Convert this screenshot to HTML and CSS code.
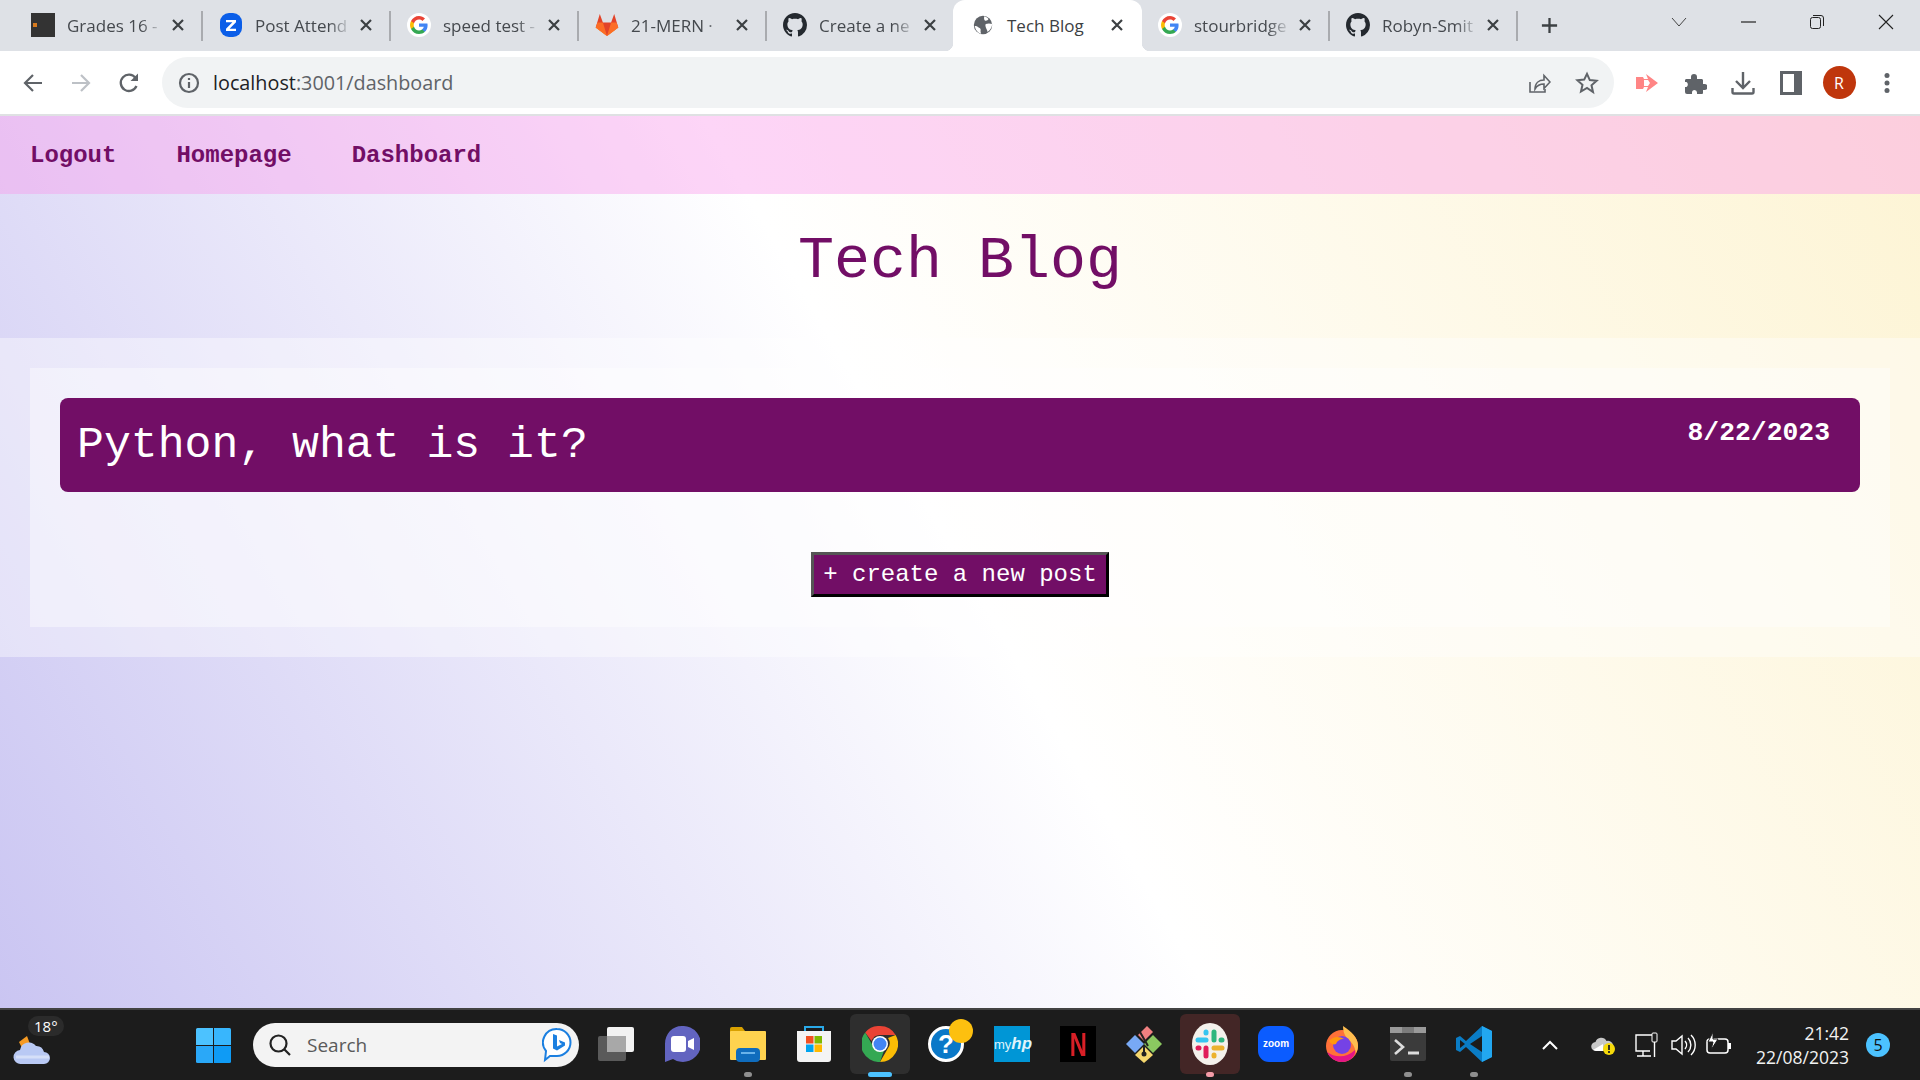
FILE: index.html
```html
<!DOCTYPE html>
<html lang="en">
<head>
  <meta charset="UTF-8" />
  <title>Tech Blog</title>
  <link rel="stylesheet" href="styles.css">
</head>
<body>
  <svg class="defs" width="0" height="0">
    <symbol id="g-logo" viewBox="0 0 24 24">
      <circle cx="12" cy="12" r="12" fill="#fff"/>
      <path fill="#4285f4" d="M20.6 12.2c0-.6-.1-1.200-.2-1.800H12v3.400h4.800c-.2 1.100-.8 2-1.800 2.700v2.200h2.900c1.700-1.600 2.700-3.800 2.700-6.500z"/>
      <path fill="#34a853" d="M12 21c2.400 0 4.400-.8 5.900-2.200L15 16.500c-.8.500-1.800.9-3 .9-2.300 0-4.300-1.600-5-3.700H4v2.300C5.500 19 8.500 21 12 21z"/>
      <path fill="#fbbc05" d="M7 13.700c-.2-.5-.3-1.100-.3-1.700s.1-1.200.3-1.700V8H4c-.6 1.200-1 2.600-1 4s.4 2.800 1 4l3-2.300z"/>
      <path fill="#ea4335" d="M12 6.600c1.300 0 2.500.5 3.400 1.300L18 5.400C16.400 3.900 14.400 3 12 3 8.500 3 5.500 5 4 8l3 2.300c.7-2.100 2.700-3.700 5-3.700z"/>
    </symbol>
    <symbol id="gh-logo" viewBox="0 0 16 16">
      <path fill="#24292f" d="M8 0C3.580 0 0 3.580 0 8c0 3.540 2.290 6.530 5.470 7.590.4.070.55-.17.55-.38 0-.19-.01-.82-.01-1.490-2.010.37-2.530-.49-2.690-.94-.09-.23-.48-.94-.82-1.130-.28-.15-.68-.52-.01-.53.63-.01 1.080.58 1.230.82.720 1.210 1.870.87 2.330.66.070-.52.280-.87.510-1.070-1.780-.2-3.640-.89-3.640-3.950 0-.87.310-1.590.820-2.150-.08-.2-.36-1.020.08-2.120 0 0 .67-.21 2.200.82.640-.18 1.320-.27 2-.27s1.360.09 2 .27c1.530-1.040 2.200-.82 2.200-.82.440 1.100.16 1.920.08 2.120.51.560.82 1.270.82 2.150 0 3.070-1.870 3.750-3.650 3.950.29.250.54.730.54 1.480 0 1.070-.01 1.930-.01 2.200 0 .21.150.46.550.38A8.010 8.010 0 0 0 16 8c0-4.420-3.580-8-8-8z"/>
    </symbol>
    <symbol id="x-icon" viewBox="0 0 14 14">
      <path d="M2 2l10 10M12 2L2 12" stroke="#3c4043" stroke-width="2.200" fill="none"/>
    </symbol>
  </svg>

  <div class="tabstrip">
    <div class="tab">
      <span class="favicon fav-grades"><i></i></span>
      <span class="tab-title">Grades 16 -</span>
      <svg class="tab-close"><use href="#x-icon"/></svg>
    </div>
    <span class="sep"></span>
    <div class="tab">
      <svg class="favicon" viewBox="0 0 24 24"><rect x="1" width="22" height="24" rx="9" fill="#0b5ee8"/><path d="M7 7h10v2.200l-6.400 6.600H17V18H7v-2.200l6.400-6.600H7z" fill="#fff"/></svg>
      <span class="tab-title">Post Attend</span>
      <svg class="tab-close"><use href="#x-icon"/></svg>
    </div>
    <span class="sep"></span>
    <div class="tab">
      <svg class="favicon"><use href="#g-logo"/></svg>
      <span class="tab-title">speed test -</span>
      <svg class="tab-close"><use href="#x-icon"/></svg>
    </div>
    <span class="sep"></span>
    <div class="tab">
      <svg class="favicon" viewBox="0 0 24 24">
        <path fill="#e24329" d="M12 23L.7 14.500 4.800 1l3.100 8.500h8.200L19.200 1l4.100 13.500z"/>
        <path fill="#fca326" d="M12 23L.7 14.500l2-1.500L12 23zm0 0l11.300-8.500-2-1.500L12 23z"/>
        <path fill="#fc6d26" d="M12 23L.7 14.500 2.500 9.500 7.900 9.500zm0 0l11.300-8.500-1.800-5-5.400 0z"/>
      </svg>
      <span class="tab-title">21-MERN ·</span>
      <svg class="tab-close"><use href="#x-icon"/></svg>
    </div>
    <span class="sep"></span>
    <div class="tab">
      <svg class="favicon"><use href="#gh-logo"/></svg>
      <span class="tab-title">Create a ne</span>
      <svg class="tab-close"><use href="#x-icon"/></svg>
    </div>
    <span class="sep off"></span>
    <div class="tab active">
      <svg class="favicon globe" viewBox="0 0 24 24">
        <circle cx="12" cy="12" r="10" fill="#5f6368"/>
        <path fill="#fff" d="M13.500 2.500c1.500.5 3.300 1.600 4.500 3-.8 1.500-2.500 2.200-4 1.500-.8-.5-1.200-3-.5-4.500zM3 13c2 0 3.500.5 4.500 2 1.300.2 2 1.200 2 2.500-.5 1.500.2 3 .5 4-3.500-.8-6.300-4.500-7-8.500zM15 11c2-1 5-1 7 0 0 3-1.800 6.500-5 8.500-.3-2.500-3.500-6-2-8.500z"/>
      </svg>
      <span class="tab-title">Tech Blog</span>
      <svg class="tab-close"><use href="#x-icon"/></svg>
    </div>
    <span class="sep off"></span>
    <div class="tab">
      <svg class="favicon"><use href="#g-logo"/></svg>
      <span class="tab-title">stourbridge</span>
      <svg class="tab-close"><use href="#x-icon"/></svg>
    </div>
    <span class="sep"></span>
    <div class="tab">
      <svg class="favicon"><use href="#gh-logo"/></svg>
      <span class="tab-title">Robyn-Smit</span>
      <svg class="tab-close"><use href="#x-icon"/></svg>
    </div>
    <span class="sep"></span>
    <svg class="new-tab" viewBox="0 0 20 20"><path d="M10 2v16M2 10h16" stroke="#3c4043" stroke-width="2.400"/></svg>

    <div class="win-controls">
      <span class="win-btn"><svg width="16" height="16" viewBox="0 0 16 16"><path d="M1 4l7 8 7-8" stroke="#444" fill="none"/></svg></span>
      <span class="win-btn"><svg width="16" height="16" viewBox="0 0 16 16"><path d="M1 8h15" stroke="#222" stroke-width="1.200"/></svg></span>
      <span class="win-btn"><svg width="16" height="16" viewBox="0 0 16 16"><rect x="1.500" y="3.500" width="10" height="11" rx="2" stroke="#222" fill="none"/><path d="M4 1.500h8a2.500 2.500 0 0 1 2.500 2.500v8" stroke="#222" fill="none"/></svg></span>
      <span class="win-btn"><svg width="16" height="16" viewBox="0 0 16 16"><path d="M1 1l14 14M15 1L1 15" stroke="#222" stroke-width="1.100"/></svg></span>
    </div>
  </div>

  <div class="toolbar">
    <span class="tool-btn"><svg width="24" height="24" viewBox="0 0 24 24"><path d="M21 12H4M12 4l-8 8 8 8" stroke="#5f6368" stroke-width="2.200" fill="none"/></svg></span>
    <span class="tool-btn"><svg width="24" height="24" viewBox="0 0 24 24"><path d="M3 12h17M12 4l8 8-8 8" stroke="#bdc1c6" stroke-width="2.200" fill="none"/></svg></span>
    <span class="tool-btn"><svg width="24" height="24" viewBox="0 0 24 24"><path d="M19.500 15a8.200 8.200 0 1 1-1-8.200" stroke="#5f6368" stroke-width="2.300" fill="none"/><path d="M21 2.500V10h-7.500z" fill="#5f6368"/></svg></span>

    <div class="omnibox">
      <svg class="omni-icon" viewBox="0 0 24 24"><circle cx="12" cy="12" r="9" stroke="#5f6368" stroke-width="2.200" fill="none"/><path d="M12 11v6M12 7v2" stroke="#5f6368" stroke-width="2.200"/></svg>
      <span class="address"><span class="host">localhost</span>:3001/dashboard</span>
      <div class="omni-right">
        <svg class="omni-icon" viewBox="0 0 24 24"><path d="M3 11v10h15v-3" stroke="#5f6368" stroke-width="1.600" fill="none"/><path d="M8 18c0-6 4-9 9-9V4.500l6 6.500-6 6.500V13c-4 0-7 1.500-9 5z" stroke="#5f6368" stroke-width="1.600" fill="none"/></svg>
        <svg class="omni-icon" viewBox="0 0 24 24"><path d="M12 2.800l2.800 6.300 6.800.7-5.100 4.500 1.500 6.700L12 17l-6 3.500 1.500-6.700-5.100-4.500 6.800-.7z" stroke="#5f6368" stroke-width="2" fill="none"/></svg>
      </div>
    </div>

    <div class="tool-group">
      <span class="tool-btn"><svg width="24" height="24" viewBox="0 0 24 24"><path d="M1 6h7l1 2h4l-2-5 12 9-12 9 2-5H9l-1 2H1z" fill="#ff8585"/><path d="M9 9h4l2 3-2 3H9z" fill="#fff"/></svg></span>
      <span class="tool-btn"><svg width="24" height="24" viewBox="0 0 24 24"><path fill="#5f6368" d="M3 8h5V6a3 3 0 0 1 6 0v2h5a2 2 0 0 1 1 1v4h1.500a3 3 0 0 1 0 6H20v3a1 1 0 0 1-1 1h-5v-1.500a2.500 2.500 0 0 0-5 0V23H4a2 2 0 0 1-2-2v-5h1.500a3 3 0 0 0 0-5H2V9a2 2 0 0 1 1-1z"/></svg></span>
      <span class="tool-btn"><svg width="24" height="24" viewBox="0 0 24 24"><path d="M12 1v15M5 10l7 7 7-7" stroke="#5f6368" stroke-width="2.400" fill="none"/><path d="M1.500 17v4a1.500 1.500 0 0 0 1.500 1.500h18a1.500 1.500 0 0 0 1.500-1.500v-4" stroke="#5f6368" stroke-width="2.400" fill="none"/></svg></span>
      <span class="tool-btn"><svg width="22" height="24" viewBox="0 0 22 24"><path fill="#5f6368" fill-rule="evenodd" d="M0 0h22v24H0zM3 3v18h11V3z"/></svg></span>
      <span class="tool-btn"><span class="avatar">R</span></span>
      <span class="tool-btn"><svg width="6" height="24" viewBox="0 0 6 24"><circle cx="3" cy="4.500" r="2.500" fill="#5f6368"/><circle cx="3" cy="12" r="2.500" fill="#5f6368"/><circle cx="3" cy="19.500" r="2.500" fill="#5f6368"/></svg></span>
    </div>
  </div>

  <div class="page">
    <nav class="site-nav">
      <a>Logout</a>
      <a>Homepage</a>
      <a>Dashboard</a>
    </nav>
    <header class="site-header">
      <h1>Tech Blog</h1>
    </header>
    <main class="site-main">
      <div class="dash-card">
        <div class="post-bar">
          <h2>Python, what is it?</h2>
          <span class="post-date">8/22/2023</span>
        </div>
        <div class="actions">
          <button class="new-post">+ create a new post</button>
        </div>
      </div>
    </main>
  </div>

  <footer class="taskbar">
    <div class="weather">
      <svg width="40" height="36" viewBox="0 0 40 36">
        <path d="M6 10l8-6 3 8-8 4z" fill="#f59a23"/>
        <path d="M8 32a7 7 0 0 1-1-14 9 9 0 0 1 16-4 8 8 0 0 1 8 6 6 6 0 0 1 0 12z" fill="#b9c9f4"/>
        <path d="M3 25h33" stroke="#e8eefc" stroke-width="3" opacity=".6"/>
      </svg>
      <span class="temp">18°</span>
    </div>

    <span class="start-btn">
      <svg width="35" height="35" viewBox="0 0 35 35">
        <path fill="#4cc2ff" d="M0 1.500A1.500 1.500 0 0 1 1.500 0H17v17H0z"/>
        <path fill="#38b6fd" d="M18 0h15.500A1.500 1.500 0 0 1 35 1.500V17H18z"/>
        <path fill="#2aa8f8" d="M0 18h17v17H1.500A1.500 1.500 0 0 1 0 33.500z"/>
        <path fill="#0f9bf5" d="M18 18h17v15.500a1.500 1.500 0 0 1-1.500 1.500H18z"/>
      </svg>
    </span>

    <div class="searchbox">
      <svg width="24" height="24" viewBox="0 0 24 24"><circle cx="10.500" cy="10.500" r="8" stroke="#222" stroke-width="2.200" fill="none"/><path d="M16.500 16.500L22 22" stroke="#222" stroke-width="2.200"/></svg>
      <span class="search-label">Search</span>
      <svg class="bing" width="30" height="36" viewBox="0 0 30 36">
        <path d="M15 2a13.500 13.500 0 0 1 0 27H8l-5 4 1-9A13.500 13.500 0 0 1 15 2z" fill="#fff" stroke="#1b7fe0" stroke-width="2"/>
        <path d="M11 7l4 1.500v11l5-2.500-2-1-1-3 6 2.500v3l-8 5-4-2z" fill="#1b7fe0"/>
      </svg>
    </div>

    <div class="apps">
      <span class="app">
        <svg width="36" height="34" viewBox="0 0 36 34"><rect y="9" width="28" height="25" rx="2" fill="#5a5a5a"/><rect x="9" width="27" height="25" rx="2" fill="#f2f2f2"/><rect x="9" y="9" width="19" height="16" fill="#a8a8a8"/></svg>
      </span>
      <span class="app">
        <svg width="36" height="36" viewBox="0 0 36 36"><path d="M18 0C8 0 1 8 1 18v18l8-3a18 18 0 1 0 9-33z" fill="#6264c0"/><rect x="7" y="10" width="15" height="16" rx="3" fill="#fff"/><path d="M24 15l6-3v12l-6-3z" fill="#fff"/></svg>
      </span>
      <span class="app">
        <svg width="36" height="36" viewBox="0 0 36 36"><path d="M0 3a2 2 0 0 1 2-2h10l3 4v6H0z" fill="#d9a100"/><rect y="5" width="36" height="29" rx="1" fill="#ffd34f"/><rect x="6" y="22" width="24" height="14" rx="4" fill="#0f6cbd"/><path d="M11 27h14" stroke="#7fc4f5" stroke-width="1.600"/></svg>
        <i class="dot"></i>
      </span>
      <span class="app">
        <svg width="36" height="36" viewBox="0 0 36 36"><path d="M9 6V1h18v5" stroke="#29a9e8" stroke-width="2" fill="none"/><path d="M1 5h34v28a3 3 0 0 1-3 3H4a3 3 0 0 1-3-3z" fill="#f4f4f4"/><rect x="10" y="10" width="7.500" height="7.500" fill="#f25022"/><rect x="18.500" y="10" width="7.500" height="7.500" fill="#7fba00"/><rect x="10" y="18.500" width="7.500" height="7.500" fill="#00a4ef"/><rect x="18.500" y="18.500" width="7.500" height="7.500" fill="#ffb900"/></svg>
      </span>
      <span class="app current">
        <svg width="36" height="36" viewBox="0 0 36 36"><path d="M18 0a18 18 0 0 1 15.600 9H18a9 9 0 0 0-8.500 6L3.200 6.500A18 18 0 0 1 18 0z" fill="#ea4335"/><path d="M33.600 9A18 18 0 0 1 18 36l7.800-13.500A9 9 0 0 0 26 12z" fill="#fbbc05"/><path d="M18 36A18 18 0 0 1 3.200 6.500l7.800 13.500a9 9 0 0 0 11 4.500z" fill="#34a853"/><circle cx="18" cy="18" r="8" fill="#fff"/><circle cx="18" cy="18" r="6.500" fill="#4285f4"/></svg>
        <i class="dot wide"></i>
      </span>
      <span class="app app-help">
        <span class="help-ring">?</span>
        <i class="help-blob"></i>
      </span>
      <span class="app"><span class="myhp">my<em>hp</em></span></span>
      <span class="app"><span class="netflix"><b>N</b></span></span>
      <span class="app">
        <svg width="36" height="38" viewBox="0 0 36 38">
          <path d="M18 9l9-9 6 6-9 9z" fill="#f08080" transform="translate(-6 1)"/>
          <path d="M9 10l9 9-9 9-9-9z" fill="#78a9f5"/>
          <path d="M27 10l9 9-9 9-9-9z" fill="#8bc860"/>
          <path d="M18 21l9 9-9 8-9-8z" fill="#f5d76e"/>
          <path d="M14 7l8 14M18 21v9" stroke="#222" stroke-width="2"/>
          <circle cx="18" cy="29" r="2.500" fill="#222"/>
        </svg>
      </span>
      <span class="app slack-on">
        <span class="slack">
          <svg width="30" height="30" viewBox="0 0 30 30" fill="none" stroke-width="5" stroke-linecap="round">
            <path d="M3 11h8" stroke="#36c5f0"/><path d="M11 3v1" stroke="#36c5f0"/>
            <path d="M19 3v8" stroke="#2eb67d"/><path d="M26 11h1" stroke="#2eb67d"/>
            <path d="M19 19h8" stroke="#ecb22e"/><path d="M19 26v1" stroke="#ecb22e"/>
            <path d="M11 19v8" stroke="#e01e5a"/><path d="M3 19h1" stroke="#e01e5a"/>
          </svg>
        </span>
        <i class="dot pink"></i>
      </span>
      <span class="app"><span class="zoom-ic">zoom</span></span>
      <span class="app">
        <svg width="36" height="36" viewBox="0 0 36 36">
          <circle cx="18" cy="20" r="16" fill="#ff7139"/>
          <path d="M18 36a16 16 0 0 1-15-10c8 6 20 6 28-2 1 6-5 12-13 12z" fill="#e31587"/>
          <path d="M19 0c9 6 15 12 15 20 0 3-1 5-2 7-1-8-6-12-10-16-2-3-3-7-3-11z" fill="#ffbd4f"/>
          <circle cx="18" cy="19" r="9" fill="#7542e5"/>
          <path d="M5 15c4-5 11-5 15-2-4 0-7 2-8 5-3 1-5 0-7-3z" fill="#ff980e"/>
        </svg>
      </span>
      <span class="app">
        <svg width="36" height="34" viewBox="0 0 36 34"><rect width="36" height="34" rx="2" fill="#3b3b3b"/><rect width="36" height="6" fill="#9a9a9a"/><rect x="12" width="12" height="6" fill="#7c7c7c"/><path d="M5 13l8 7-8 7" stroke="#ddd" stroke-width="2.600" fill="none"/><path d="M18 26h11" stroke="#ddd" stroke-width="3"/></svg>
        <i class="dot"></i>
      </span>
      <span class="app">
        <svg width="36" height="36" viewBox="0 0 36 36"><path d="M26 0l10 5v26l-10 5-16-15-6 5-4-2V12l4-2 6 5z" fill="#0a7cc5"/><path d="M26 0l10 5v26l-10 5z" fill="#22a7f0"/><path d="M26 10L14 18l12 8z" fill="#1c1c1c"/><path d="M4 14l5 4-5 4z" fill="#1c1c1c"/></svg>
        <i class="dot"></i>
      </span>
    </div>

    <div class="tray">
      <span class="tray-item chevron"><svg width="18" height="12" viewBox="0 0 18 12"><path d="M2 10l7-7 7 7" stroke="#fff" stroke-width="2" fill="none"/></svg></span>
      <span class="tray-item cloud">
        <svg width="26" height="24" viewBox="0 0 26 24"><path d="M5 18a4.500 4.500 0 0 1-.5-9 6 6 0 0 1 11-1 5 5 0 0 1 3 10z" fill="#c8c8c8"/><path d="M2 17l10-6v7H5z" fill="#fff"/><circle cx="18" cy="16" r="6" fill="#f5d90a"/><path d="M18 12v5M18 18v2" stroke="#222" stroke-width="1.800"/></svg>
      </span>
      <span class="tray-item">
        <svg width="26" height="26" viewBox="0 0 26 26"><path d="M18 3H2v16h14M9 19v5M3 24h14" stroke="#fff" stroke-width="1.400" fill="none"/><rect x="18" y="1" width="5" height="9" rx="1" stroke="#fff" fill="none"/><path d="M20.500 10v15" stroke="#fff" stroke-width="1.400"/></svg>
      </span>
      <span class="tray-item">
        <svg width="26" height="26" viewBox="0 0 26 26"><path d="M2 9h4l6-5v18l-6-5H2z" stroke="#fff" stroke-width="1.400" fill="none"/><path d="M15 9a6 6 0 0 1 0 8M18 6a10 10 0 0 1 0 14M21 3a14 14 0 0 1 0 20" stroke="#fff" stroke-width="1.400" fill="none"/></svg>
      </span>
      <span class="tray-item">
        <svg width="26" height="26" viewBox="0 0 26 26"><rect x="1" y="7" width="21" height="14" rx="3" stroke="#fff" stroke-width="1.500" fill="none"/><rect x="22" y="11" width="3" height="6" fill="#fff"/><path d="M7 0L2 10h5l-2 8 7-11H7z" fill="#fff" stroke="#1c1c1c"/></svg>
      </span>
      <div class="clock">
        <span>21:42</span>
        <span>22/08/2023</span>
      </div>
      <span class="notif">5</span>
    </div>
  </footer>
</body>
</html>
```

FILE: styles.css
```css
* {
  box-sizing: border-box;
}
html, body {
  height: 100%;
}
body {
  margin: 0;
  height: 1080px;
  overflow: hidden;
  display: flex;
  flex-direction: column;
  font-family: "Open Sans", "Noto Sans", sans-serif;
  background: #fff;
}
.defs {
  position: absolute;
}

/* browser chrome */
.tabstrip {
  height: 51px;
  flex: none;
  display: flex;
  align-items: center;
  padding-left: 15px;
  background: #dee1e6;
}
.tab {
  width: 186px;
  height: 51px;
  flex: none;
  display: flex;
  align-items: center;
  padding: 0 16px 1px 16px;
  color: #45494e;
  font-size: 17px;
}
.tab.active {
  position: relative;
  color: #3c4043;
  background: #fff;
  border-radius: 12px 12px 0 0;
  margin: 0 -2px 0 -2px;
  width: 189px;
  padding-left: 18px;
  padding-right: 18px;
}
.tab.active::before,
.tab.active::after {
  content: "";
  position: absolute;
  bottom: 0;
  width: 8px;
  height: 8px;
}
.tab.active::before {
  left: -8px;
  background: radial-gradient(circle at 0 0, transparent 8px, #fff 8.5px);
}
.tab.active::after {
  right: -8px;
  background: radial-gradient(circle at 100% 0, transparent 8px, #fff 8.5px);
}
.favicon {
  width: 24px;
  height: 24px;
  flex: none;
}
.fav-grades {
  background: #333;
  display: flex;
  align-items: center;
  padding-left: 2px;
}
.fav-grades i {
  width: 4px;
  height: 4px;
  background: #d77b1f;
}
.globe {
  width: 22px;
  height: 22px;
  margin: 0 1px;
}
.tab-title {
  flex: 1;
  min-width: 0;
  margin-left: 12px;
  white-space: nowrap;
  -webkit-mask-image: linear-gradient(to right, #000 76%, transparent 100%);
  mask-image: linear-gradient(to right, #000 76%, transparent 100%);
}
.active .tab-title {
  -webkit-mask-image: none;
  mask-image: none;
}
.tab-close {
  width: 14px;
  height: 14px;
  flex: none;
  margin-left: 7px;
}
.sep {
  width: 2px;
  height: 30px;
  flex: none;
  background: #a9abaf;
}
.sep.off {
  background: transparent;
}
.new-tab {
  width: 19px;
  height: 19px;
  margin-left: 22px;
  flex: none;
}
.win-controls {
  margin-left: auto;
  align-self: flex-start;
  display: flex;
}
.win-btn {
  width: 69px;
  height: 44px;
  display: flex;
  align-items: center;
  justify-content: center;
}
.toolbar {
  height: 65px;
  flex: none;
  display: flex;
  align-items: center;
  padding-left: 9px;
  background: #fff;
  border-bottom: 2px solid #dfe1e3;
}
.tool-btn {
  width: 48px;
  height: 48px;
  flex: none;
  display: flex;
  align-items: center;
  justify-content: center;
}
.omnibox {
  width: 1452px;
  height: 51px;
  margin-left: 9px;
  padding: 0 15px;
  flex: none;
  display: flex;
  align-items: center;
  gap: 12px;
  border-radius: 26px;
  background: #f1f3f4;
}
.omni-icon {
  width: 24px;
  height: 24px;
  flex: none;
}
.address {
  font-size: 19.800px;
  color: #5f6368;
}
.host {
  color: #202124;
}
.omni-right {
  margin-left: auto;
  display: flex;
  gap: 24px;
}
.tool-group {
  display: flex;
  margin-left: 9px;
}
.avatar {
  width: 33px;
  height: 33px;
  border-radius: 50%;
  background: #bf360c;
  color: #fff;
  font-size: 16px;
  display: flex;
  align-items: center;
  justify-content: center;
}

/* the site itself */
.page {
  flex: 1;
  min-height: 0;
  font-family: "Liberation Mono", "Courier New", monospace;
  color: #720e66;
  background: linear-gradient(60deg, #cac5f2 0%, #ffffff 50%, #fdf4d4 100%);
}
.site-nav {
  height: 78px;
  display: flex;
  align-items: center;
  gap: 60px;
  padding: 0 30px;
  font-size: 24px;
  font-weight: bold;
  background: rgba(250, 150, 235, 0.4);
}
.site-header {
  height: 144px;
  display: flex;
  align-items: center;
  justify-content: center;
}
.site-header h1 {
  margin: 0 0 10px;
  font-size: 60px;
  font-weight: normal;
}
.site-main {
  padding: 30px;
  background: rgba(255, 255, 255, 0.4);
}
.dash-card {
  padding: 30px;
  background: rgba(255, 255, 255, 0.4);
}
.post-bar {
  height: 94px;
  display: flex;
  justify-content: space-between;
  padding: 0 30px 0 17px;
  border-radius: 8px;
  background: #720e66;
  color: #fff;
}
.post-bar h2 {
  margin: 22px 0 0;
  font-size: 44.800px;
  font-weight: normal;
  line-height: 50px;
}
.post-date {
  margin-top: 20px;
  font-size: 26.400px;
  font-weight: bold;
  line-height: 30px;
}
.actions {
  margin-top: 60px;
  display: flex;
  justify-content: center;
}
.new-post {
  height: 45px;
  width: 298px;
  padding: 0;
  font-family: inherit;
  font-size: 24px;
  color: #fff;
  background: #720e66;
  border: 3px solid;
  border-color: #555 #000 #000 #555;
}

/* windows taskbar */
.taskbar {
  height: 72px;
  flex: none;
  display: flex;
  align-items: center;
  background: #1c1c1c;
  border-top: 2px solid #434343;
  color: #fff;
}
.weather {
  width: 180px;
  flex: none;
  padding: 14px 0 0 13px;
  position: relative;
}
.temp {
  position: absolute;
  left: 28px;
  top: -2px;
  padding: 0 6px;
  border-radius: 14px;
  background: #2b2b2b;
  font-size: 15px;
}
.start-btn {
  width: 66px;
  flex: none;
  display: flex;
  justify-content: center;
}
.searchbox {
  width: 326px;
  height: 44px;
  margin-left: 7px;
  padding: 0 7px 0 15px;
  flex: none;
  display: flex;
  align-items: center;
  gap: 15px;
  border-radius: 22px;
  background: #f3f3f3;
}
.search-label {
  color: #5a5a5a;
  font-size: 19px;
}
.bing {
  margin-left: auto;
}
.apps {
  margin-left: 4px;
  display: flex;
  flex: none;
}
.app {
  position: relative;
  width: 66px;
  height: 70px;
  display: flex;
  align-items: center;
  justify-content: center;
  padding-bottom: 2px;
}
.app.current::before,
.app.slack-on::before {
  content: "";
  position: absolute;
  left: 3px;
  right: 3px;
  top: 4px;
  bottom: 6px;
  border-radius: 6px;
  background: #2e2e2e;
}
.app.slack-on::before {
  background: #432626;
}
.app > svg,
.app > span {
  position: relative;
}
.dot {
  position: absolute;
  left: 29px;
  bottom: 3px;
  width: 8px;
  height: 5px;
  border-radius: 3px;
  background: #8f8f8f;
}
.dot.wide {
  left: 21px;
  width: 24px;
  background: #4cc2ff;
}
.dot.pink {
  background: #f49ca8;
}
.help-ring {
  width: 36px;
  height: 36px;
  border-radius: 50%;
  border: 3px solid #fff;
  background: #0a78c8;
  color: #fff;
  font: bold 26px "Liberation Sans", sans-serif;
  display: flex;
  align-items: center;
  justify-content: center;
}
.help-blob {
  position: absolute;
  left: 36px;
  top: 9px;
  width: 24px;
  height: 24px;
  border-radius: 50%;
  background: #fdc00f;
}
.myhp {
  width: 36px;
  height: 36px;
  background: #0096d6;
  color: #dff3fb;
  font: 13px/36px "Liberation Sans", sans-serif;
  text-align: center;
}
.myhp em {
  font-size: 17px;
  font-weight: bold;
}
.netflix {
  width: 36px;
  height: 36px;
  background: #000;
  color: #d81f26;
  font: 34px/36px "Liberation Sans", sans-serif;
  text-align: center;
}
.netflix b {
  display: inline-block;
  transform: scaleX(0.7);
}
.slack {
  width: 36px;
  height: 42px;
  border-radius: 50%;
  background: #f4f1ec;
  display: flex;
  align-items: center;
  justify-content: center;
}
.zoom-ic {
  width: 36px;
  height: 36px;
  border-radius: 11px;
  background: #0b5cff;
  color: #fff;
  font: bold 10px/36px "Liberation Sans", sans-serif;
  text-align: center;
}
.tray {
  display: flex;
  align-items: center;
  margin-left: 25px;
}
.tray-item {
  width: 36px;
  height: 36px;
  flex: none;
  display: flex;
  align-items: center;
  justify-content: center;
}
.cloud {
  margin: 0 7px 0 18px;
}
.clock {
  width: 112px;
  display: flex;
  flex-direction: column;
  align-items: flex-end;
  font-size: 17.500px;
  line-height: 24px;
  color: #f2f2f2;
}
.notif {
  width: 24px;
  height: 24px;
  margin-left: 17px;
  border-radius: 50%;
  background: #4cc2ff;
  color: #111;
  font-size: 16px;
  display: flex;
  align-items: center;
  justify-content: center;
}
```
